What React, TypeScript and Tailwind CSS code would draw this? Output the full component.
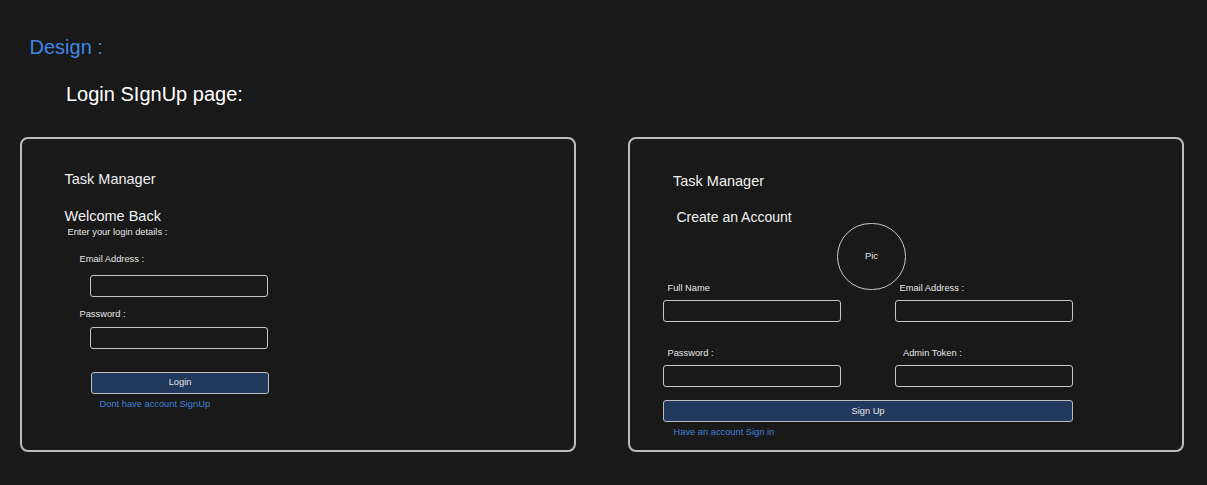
import React from "react";

const small = "text-[9.3px] leading-[11px] text-[#e6e6e6]";

function Input({ className = "" }: { className?: string }) {
  return (
    <div
      className={`h-[22px] w-[178px] rounded-[3px] border-[1.5px] border-[#c6c6c6] bg-[#191919] ${className}`}
    />
  );
}

export default function App() {
  return (
    <div
      className="h-[485px] w-[1207px] overflow-hidden bg-[#191919] pt-[35px] text-white"
      style={{ fontFamily: '"Liberation Sans", Arial, sans-serif' }}
    >
      <div className="ml-[29.5px] text-[20px] leading-[24px] text-[#3f86e2]">Design :</div>
      <div className="ml-[66px] mt-[22.5px] text-[20px] leading-[24px] text-white">Login SIgnUp page:</div>

      <div className="ml-[20px] mt-[31.5px] flex gap-[52px]">
        {/* Login panel */}
        <div className="flex h-[315px] w-[556px] flex-col items-start rounded-[8px] border-2 border-[#bcbcbc] pt-[31.5px]">
          <div className="ml-[42.5px] text-[14.5px] leading-[17px] text-[#f0f0f0]">Task Manager</div>
          <div className="ml-[42.5px] mt-[20px] text-[14.5px] leading-[17px] text-[#f0f0f0]">Welcome Back</div>
          <div className={`ml-[45.5px] mt-[2px] ${small}`}>Enter your login details :</div>
          <div className={`ml-[57.5px] mt-[16px] ${small}`}>Email Address :</div>
          <Input className="ml-[68px] mt-[10.5px]" />
          <div className={`ml-[57.5px] mt-[12px] ${small}`}>Password :</div>
          <Input className="ml-[68px] mt-[7px]" />
          <div className="ml-[69px] mt-[23px] flex h-[21.5px] w-[178px] items-center justify-center rounded-[3px] border-[1.5px] border-[#bdbdbd] bg-[#21395c]">
            <span className="text-[9.3px] leading-[11px] text-[#e6e6e6]">Login</span>
          </div>
          <div className="ml-[77.5px] mt-[5px] text-[9.3px] leading-[11px] text-[#3f82dc]">Dont have account SignUp</div>
        </div>

        {/* Sign up panel */}
        <div className="relative flex h-[315px] w-[556px] flex-col items-start rounded-[8px] border-2 border-[#bcbcbc] pt-[33.5px]">
          <div className="ml-[43px] text-[14.5px] leading-[17px] text-[#f0f0f0]">Task Manager</div>
          <div className="ml-[46.5px] mt-[19px] text-[14px] leading-[17px] text-[#f0f0f0]">Create an Account</div>

          <div className="absolute left-[207px] top-[84px] flex h-[67px] w-[69px] items-center justify-center rounded-full border-[1.5px] border-[#c8c8c8]">
            <span className="text-[9.3px] leading-[11px] text-[#e6e6e6]">Pic</span>
          </div>

          <div className="ml-[33px] mt-[57.5px] grid grid-cols-[178px_178px] gap-x-[54px]">
            <div className={`ml-[4.5px] ${small}`}>Full Name</div>
            <div className={`ml-[4.5px] ${small}`}>Email Address :</div>
            <Input className="mt-[6px]" />
            <Input className="mt-[6px]" />
            <div className={`ml-[4.5px] mt-[25.5px] ${small}`}>Password :</div>
            <div className={`ml-[8px] mt-[25.5px] ${small}`}>Admin Token :</div>
            <Input className="mt-[6px]" />
            <Input className="mt-[6px]" />
          </div>
          <div className="ml-[33px] mt-[13.5px] flex h-[22px] w-[410px] items-center justify-center rounded-[3px] border-[1.5px] border-[#bdbdbd] bg-[#21395c]">
            <span className="text-[9.3px] leading-[11px] text-[#e6e6e6]">Sign Up</span>
          </div>
          <div className="ml-[43.5px] mt-[5px] text-[9.3px] leading-[11px] text-[#3f82dc]">Have an account Sign in</div>
        </div>
      </div>
    </div>
  );
}
